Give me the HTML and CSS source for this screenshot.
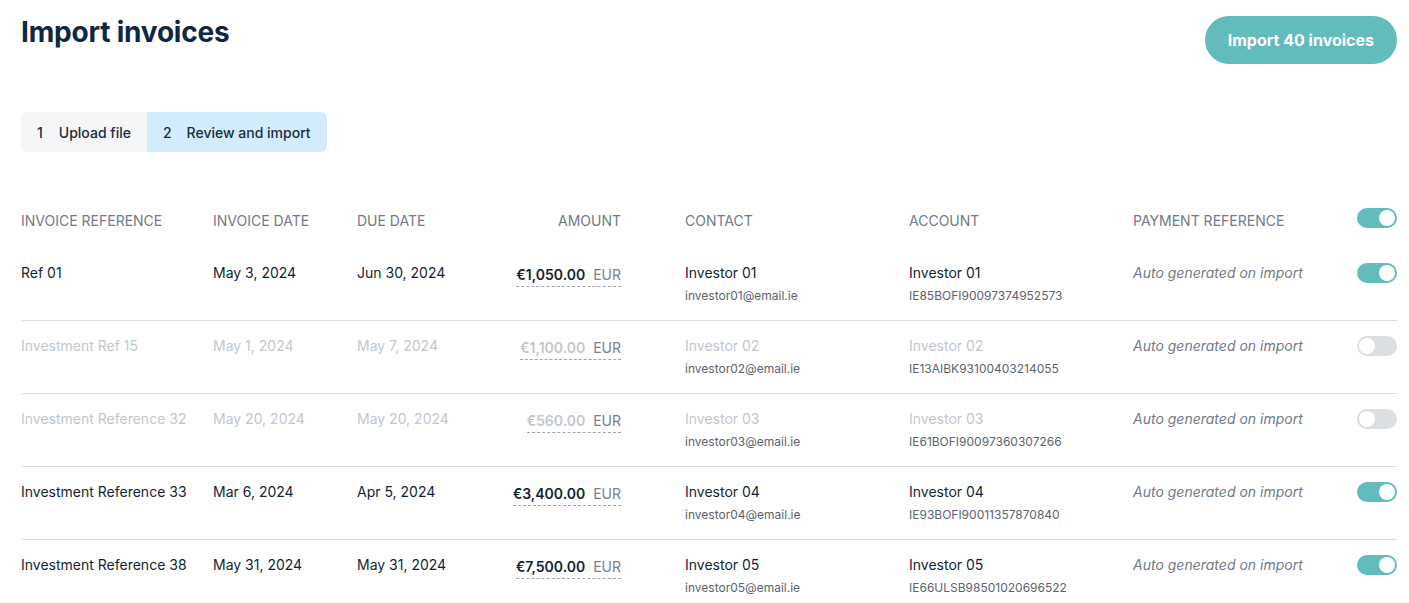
FILE: index.html
```html
<!DOCTYPE html>
<html lang="en">
<head>
    <meta charset="UTF-8">
    <title>Import invoices</title>
    <link rel="stylesheet" href="styles.css">
</head>
<body>
    <div class="page">
        <div class="page-header">
            <h1>Import invoices</h1>
            <button class="import-btn">Import 40 invoices</button>
        </div>

        <div class="steps">
            <div class="step"><span class="step-num">1</span>Upload file</div>
            <div class="step active"><span class="step-num">2</span>Review and import</div>
        </div>

        <div class="invoice-table">
            <div class="table-head">
                <div>Invoice reference</div>
                <div>Invoice date</div>
                <div>Due date</div>
                <div class="right">Amount</div>
                <div class="pad">Contact</div>
                <div>Account</div>
                <div>Payment reference</div>
                <div><span class="toggle on"></span></div>
            </div>

            <div class="table-row">
                <div class="main">Ref 01</div>
                <div class="main">May 3, 2024</div>
                <div class="main">Jun 30, 2024</div>
                <div class="right"><span class="amount"><b>€1,050.00</b> EUR</span></div>
                <div class="pad"><div class="main">Investor 01</div><div class="sub">investor01@email.ie</div></div>
                <div><div class="main">Investor 01</div><div class="sub">IE85BOFI90097374952573</div></div>
                <div class="auto">Auto generated on import</div>
                <div><span class="toggle on"></span></div>
            </div>

            <div class="table-row off">
                <div class="main">Investment Ref 15</div>
                <div class="main">May 1, 2024</div>
                <div class="main">May 7, 2024</div>
                <div class="right"><span class="amount"><b>€1,100.00</b> EUR</span></div>
                <div class="pad"><div class="main">Investor 02</div><div class="sub">investor02@email.ie</div></div>
                <div><div class="main">Investor 02</div><div class="sub">IE13AIBK93100403214055</div></div>
                <div class="auto">Auto generated on import</div>
                <div><span class="toggle"></span></div>
            </div>

            <div class="table-row off">
                <div class="main">Investment Reference 32</div>
                <div class="main">May 20, 2024</div>
                <div class="main">May 20, 2024</div>
                <div class="right"><span class="amount"><b>€560.00</b> EUR</span></div>
                <div class="pad"><div class="main">Investor 03</div><div class="sub">investor03@email.ie</div></div>
                <div><div class="main">Investor 03</div><div class="sub">IE61BOFI90097360307266</div></div>
                <div class="auto">Auto generated on import</div>
                <div><span class="toggle"></span></div>
            </div>

            <div class="table-row">
                <div class="main">Investment Reference 33</div>
                <div class="main">Mar 6, 2024</div>
                <div class="main">Apr 5, 2024</div>
                <div class="right"><span class="amount"><b>€3,400.00</b> EUR</span></div>
                <div class="pad"><div class="main">Investor 04</div><div class="sub">investor04@email.ie</div></div>
                <div><div class="main">Investor 04</div><div class="sub">IE93BOFI90011357870840</div></div>
                <div class="auto">Auto generated on import</div>
                <div><span class="toggle on"></span></div>
            </div>

            <div class="table-row">
                <div class="main">Investment Reference 38</div>
                <div class="main">May 31, 2024</div>
                <div class="main">May 31, 2024</div>
                <div class="right"><span class="amount"><b>€7,500.00</b> EUR</span></div>
                <div class="pad"><div class="main">Investor 05</div><div class="sub">investor05@email.ie</div></div>
                <div><div class="main">Investor 05</div><div class="sub">IE66ULSB98501020696522</div></div>
                <div class="auto">Auto generated on import</div>
                <div><span class="toggle on"></span></div>
            </div>
        </div>
    </div>
</body>
</html>
```

FILE: styles.css
```css
* {
    margin: 0;
    padding: 0;
    box-sizing: border-box;
    font-family: Inter, 'Noto Sans', sans-serif;
}

body {
    background-color: #fff;
    color: #131f33;
}

.page {
    padding: 16px 12px 0 21px;
}

.page-header {
    display: flex;
    justify-content: space-between;
    align-items: flex-start;
}

.page-header h1 {
    font-size: 28px;
    line-height: 32px;
    font-weight: 700;
    color: #0f2645;
    letter-spacing: -0.2px;
}

.import-btn {
    background-color: #62bcbc;
    color: #fff;
    border: none;
    border-radius: 24px;
    height: 48px;
    padding: 0 23px;
    font-size: 16px;
    font-weight: 700;
    cursor: pointer;
}

.steps {
    display: inline-flex;
    margin-top: 48px;
    border-radius: 6px;
    overflow: hidden;
}

.step {
    display: flex;
    align-items: center;
    height: 40px;
    padding: 0 16px;
    font-size: 14px;
    font-weight: 500;
    color: #1a2b42;
    background-color: #f4f6f8;
}

.step.active {
    background-color: #d3ecfb;
}

.step-num {
    margin-right: 16px;
}

.step.active .step-num {
    margin-right: 15px;
}

.invoice-table {
    margin-top: 40px;
}

.table-head,
.table-row {
    display: grid;
    grid-template-columns: 192px 144px 144px 120px 288px 224px 224px 40px;
}

.table-head {
    height: 56px;
    align-items: center;
    font-size: 14px;
    color: #737a85;
    text-transform: uppercase;
}

.table-row {
    padding: 15px 0 14px;
    border-top: 1px solid #d9dcdf;
    height: 73px;
}

.table-row:nth-child(2) {
    border-top: none;
    height: 72px;
}

.right {
    text-align: right;
}

.pad {
    padding-left: 64px;
}

.main {
    font-size: 14px;
    line-height: 20px;
    color: #131f33;
}

.sub {
    margin-top: 4px;
    font-size: 12px;
    line-height: 18px;
    color: #5c636d;
}

.amount {
    display: inline-block;
    font-size: 14px;
    line-height: 20px;
    color: #7a818b;
    padding-top: 2px;
    padding-bottom: 1px;
    border-bottom: 1px dashed #9ea5ae;
}

.amount b {
    font-size: 14px;
    font-weight: 600;
    color: #131f33;
    margin-right: 4px;
}

.auto {
    font-size: 14px;
    line-height: 20px;
    font-style: italic;
    color: #737a85;
}

.table-row.off .main,
.table-row.off .amount b {
    color: #c3c7cd;
}

.toggle {
    position: relative;
    display: block;
    width: 40px;
    height: 20px;
    border-radius: 10px;
    background-color: #dcdfe2;
}

.toggle::after {
    content: "";
    position: absolute;
    top: 2px;
    left: 2px;
    width: 16px;
    height: 16px;
    border-radius: 50%;
    background-color: #fff;
}

.toggle.on {
    background-color: #62bcbc;
}

.toggle.on::after {
    left: 22px;
}

.table-head .toggle {
    margin-top: -4px;
}
```
